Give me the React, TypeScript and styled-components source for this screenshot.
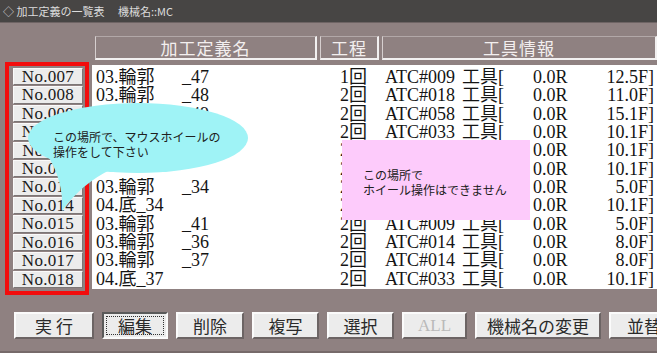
import React from "react";
import styled, { createGlobalStyle } from "styled-components";

const GlobalStyle = createGlobalStyle`
  html, body { margin: 0; padding: 0; background: #8f8181; }
  #root { width: 657px; height: 353px; overflow: hidden; }
`;

const SERIF = `"Liberation Serif", "Noto Sans CJK JP", serif`;
const SANS = `"Noto Sans CJK JP", "Noto Sans", sans-serif`;

const Window = styled.div`
  position: relative;
  width: 657px;
  height: 353px;
  display: flex;
  flex-direction: column;
  background: #8f8181;
  overflow: hidden;
  box-sizing: border-box;
  border-bottom: 2px solid #766a6a;
`;

const TitleBar = styled.div`
  height: 22px;
  flex: none;
  background: #474544;
  color: #dcdcdc;
  font-family: ${SANS};
  font-size: 11px;
  line-height: 22px;
  padding-left: 3px;
  white-space: pre;
  border-bottom: 1px solid #6e6464;
`;

const Body = styled.div`
  flex: 1;
  display: flex;
  flex-direction: column;
  padding-top: 13px;
`;

const HeaderRow = styled.div`
  display: grid;
  grid-template-columns: 222px 59px 1fr;
  column-gap: 3px;
  margin-left: 95px;
  height: 24px;
`;

const HeaderCell = styled.div`
  box-sizing: border-box;
  border-top: 1px solid #b2a8a8;
  border-left: 1px solid #d6cfcf;
  border-bottom: 2px solid #f2f0f0;
  border-right: 2px solid #f2f0f0;
  color: #f3efef;
  font-family: ${SANS};
  font-size: 17px;
  letter-spacing: 1px;
  line-height: 21px;
  text-align: center;
`;

const Main = styled.div`
  display: flex;
  align-items: flex-start;
  margin-top: 2px;
`;

const RedFrame = styled.div`
  box-sizing: border-box;
  margin-left: 5px;
  width: 84px;
  height: 233px;
  border: 4px solid #f20d0d;
  padding: 2px 2px 3px 4px;
  display: grid;
  grid-template-rows: repeat(12, 1fr);
  row-gap: 1px;
`;

const NoLabel = styled.div`
  box-sizing: border-box;
  background: #ececec;
  border-top: 1px solid #fafafa;
  border-left: 1px solid #fafafa;
  border-bottom: 1px solid #7c7676;
  border-right: 1px solid #7c7676;
  font-family: ${SERIF};
  font-size: 17px;
  line-height: 16px;
  letter-spacing: 0.3px;
  color: #1a1a1a;
  text-align: center;
  overflow: hidden;
`;

const ListPanel = styled.div`
  box-sizing: border-box;
  flex: 1;
  margin-left: 3px;
  margin-top: 3px;
  height: 224px;
  background: #ffffff;
  padding: 3px 0 1px 4px;
  display: grid;
  grid-template-rows: repeat(12, 1fr);
`;

const Row = styled.div`
  display: grid;
  grid-template-columns: 244px 45px 77px 71px 50px 71px;
  font-family: ${SERIF};
  font-size: 18px;
  line-height: 18px;
  color: #141414;
  white-space: pre;
  overflow: hidden;
`;

const Prefix = styled.span`
  display: inline-block;
  width: 86px;
`;

const Cell = styled.span<{ $right?: boolean }>`
  text-align: ${(p) => (p.$right ? "right" : "left")};
`;

const ButtonBar = styled.div`
  display: flex;
  gap: 8px;
  margin-top: 17px;
  padding-left: 14px;
  height: 27px;
`;

const Btn = styled.div<{ $w: number; $disabled?: boolean; $focused?: boolean }>`
  flex: none;
  box-sizing: border-box;
  width: ${(p) => p.$w}px;
  height: 27px;
  background: #ececec;
  border-top: 2px solid ${(p) => (p.$focused ? "#5a5a5a" : "#fbfbfb")};
  border-left: 2px solid ${(p) => (p.$focused ? "#5a5a5a" : "#fbfbfb")};
  border-bottom: 2px solid ${(p) => (p.$focused ? "#fbfbfb" : "#6c6464")};
  border-right: 2px solid ${(p) => (p.$focused ? "#fbfbfb" : "#6c6464")};
  color: ${(p) => (p.$disabled ? "#b9b9b9" : "#2a2a2a")};
  font-family: ${SERIF};
  font-size: 17px;
  display: flex;
  align-items: center;
  justify-content: center;
  padding: 2px;
  white-space: pre;
`;

const FocusRect = styled.div`
  box-sizing: border-box;
  width: 100%;
  height: 100%;
  border: 1px dotted #333;
  display: flex;
  align-items: center;
  justify-content: center;
`;

const BubbleWrap = styled.div`
  position: absolute;
  left: 20px;
  top: 95px;
  width: 240px;
  height: 125px;
`;

const BubbleText = styled.div`
  position: absolute;
  left: 33px;
  top: 34px;
  font-family: ${SANS};
  font-size: 12px;
  line-height: 15px;
  color: #202020;
  white-space: pre;
`;

const PinkNote = styled.div`
  position: absolute;
  left: 342px;
  top: 140px;
  width: 188px;
  height: 80px;
  box-sizing: border-box;
  background: #fdcbfb;
  padding: 27px 0 0 21px;
  font-family: ${SANS};
  font-size: 12px;
  line-height: 15px;
  color: #202020;
  white-space: pre;
`;

type RowData = { no: string; pre: string; suf: string; cnt: string; atc: string; f: string };

const rows: RowData[] = [
  { no: "No.007", pre: "03.輪郭", suf: "_47", cnt: "1回", atc: "ATC#009", f: "12.5F]" },
  { no: "No.008", pre: "03.輪郭", suf: "_48", cnt: "2回", atc: "ATC#018", f: "11.0F]" },
  { no: "No.009", pre: "03.輪郭", suf: "_49", cnt: "2回", atc: "ATC#058", f: "15.1F]" },
  { no: "No.010", pre: "03.輪郭", suf: "_50", cnt: "2回", atc: "ATC#033", f: "10.1F]" },
  { no: "No.011", pre: "04.底_48", suf: "", cnt: "2回", atc: "ATC#033", f: "10.1F]" },
  { no: "No.012", pre: "", suf: "", cnt: "2回", atc: "ATC#033", f: "10.1F]" },
  { no: "No.013", pre: "03.輪郭", suf: "_34", cnt: "2回", atc: "ATC#009", f: "5.0F]" },
  { no: "No.014", pre: "04.底_34", suf: "", cnt: "2回", atc: "ATC#033", f: "10.1F]" },
  { no: "No.015", pre: "03.輪郭", suf: "_41", cnt: "2回", atc: "ATC#009", f: "5.0F]" },
  { no: "No.016", pre: "03.輪郭", suf: "_36", cnt: "2回", atc: "ATC#014", f: "8.0F]" },
  { no: "No.017", pre: "03.輪郭", suf: "_37", cnt: "2回", atc: "ATC#014", f: "8.0F]" },
  { no: "No.018", pre: "04.底_37", suf: "", cnt: "2回", atc: "ATC#033", f: "10.1F]" },
];

const buttons = [
  { label: "実 行", w: 80 },
  { label: "編集", w: 66, focused: true },
  { label: "削除", w: 68 },
  { label: "複写", w: 67 },
  { label: "選択", w: 67 },
  { label: "ALL", w: 65, disabled: true },
  { label: "機械名の変更", w: 126 },
  { label: "並替", w: 70 },
];

export default function App() {
  return (
    <>
      <GlobalStyle />
      <Window>
        <TitleBar>{"◇ 加工定義の一覧表　 機械名::MC"}</TitleBar>
        <Body>
          <HeaderRow>
            <HeaderCell>加工定義名</HeaderCell>
            <HeaderCell>工程</HeaderCell>
            <HeaderCell>工具情報</HeaderCell>
          </HeaderRow>
          <Main>
            <RedFrame>
              {rows.map((r) => (
                <NoLabel key={r.no}>{r.no}</NoLabel>
              ))}
            </RedFrame>
            <ListPanel>
              {rows.map((r) => (
                <Row key={r.no}>
                  <Cell>
                    <Prefix>{r.pre}</Prefix>
                    {r.suf}
                  </Cell>
                  <Cell>{r.cnt}</Cell>
                  <Cell>{r.atc}</Cell>
                  <Cell>工具[</Cell>
                  <Cell>0.0R</Cell>
                  <Cell $right>{r.f}</Cell>
                </Row>
              ))}
            </ListPanel>
          </Main>
          <ButtonBar>
            {buttons.map((b) => (
              <Btn key={b.label} $w={b.w} $disabled={b.disabled} $focused={b.focused}>
                {b.focused ? <FocusRect>{b.label}</FocusRect> : b.label}
              </Btn>
            ))}
          </ButtonBar>
        </Body>

        <BubbleWrap>
          <svg width="240" height="125" viewBox="0 0 240 125">
            <ellipse cx="118" cy="43" rx="110" ry="35" fill="#9ff3f6" />
            <path d="M 26 58 Q 44 85 42 116 Q 62 88 92 74 Z" fill="#9ff3f6" />
          </svg>
          <BubbleText>{"この場所で、マウスホイールの\n操作をして下さい"}</BubbleText>
        </BubbleWrap>

        <PinkNote>{"この場所で\nホイール操作はできません"}</PinkNote>
      </Window>
    </>
  );
}
